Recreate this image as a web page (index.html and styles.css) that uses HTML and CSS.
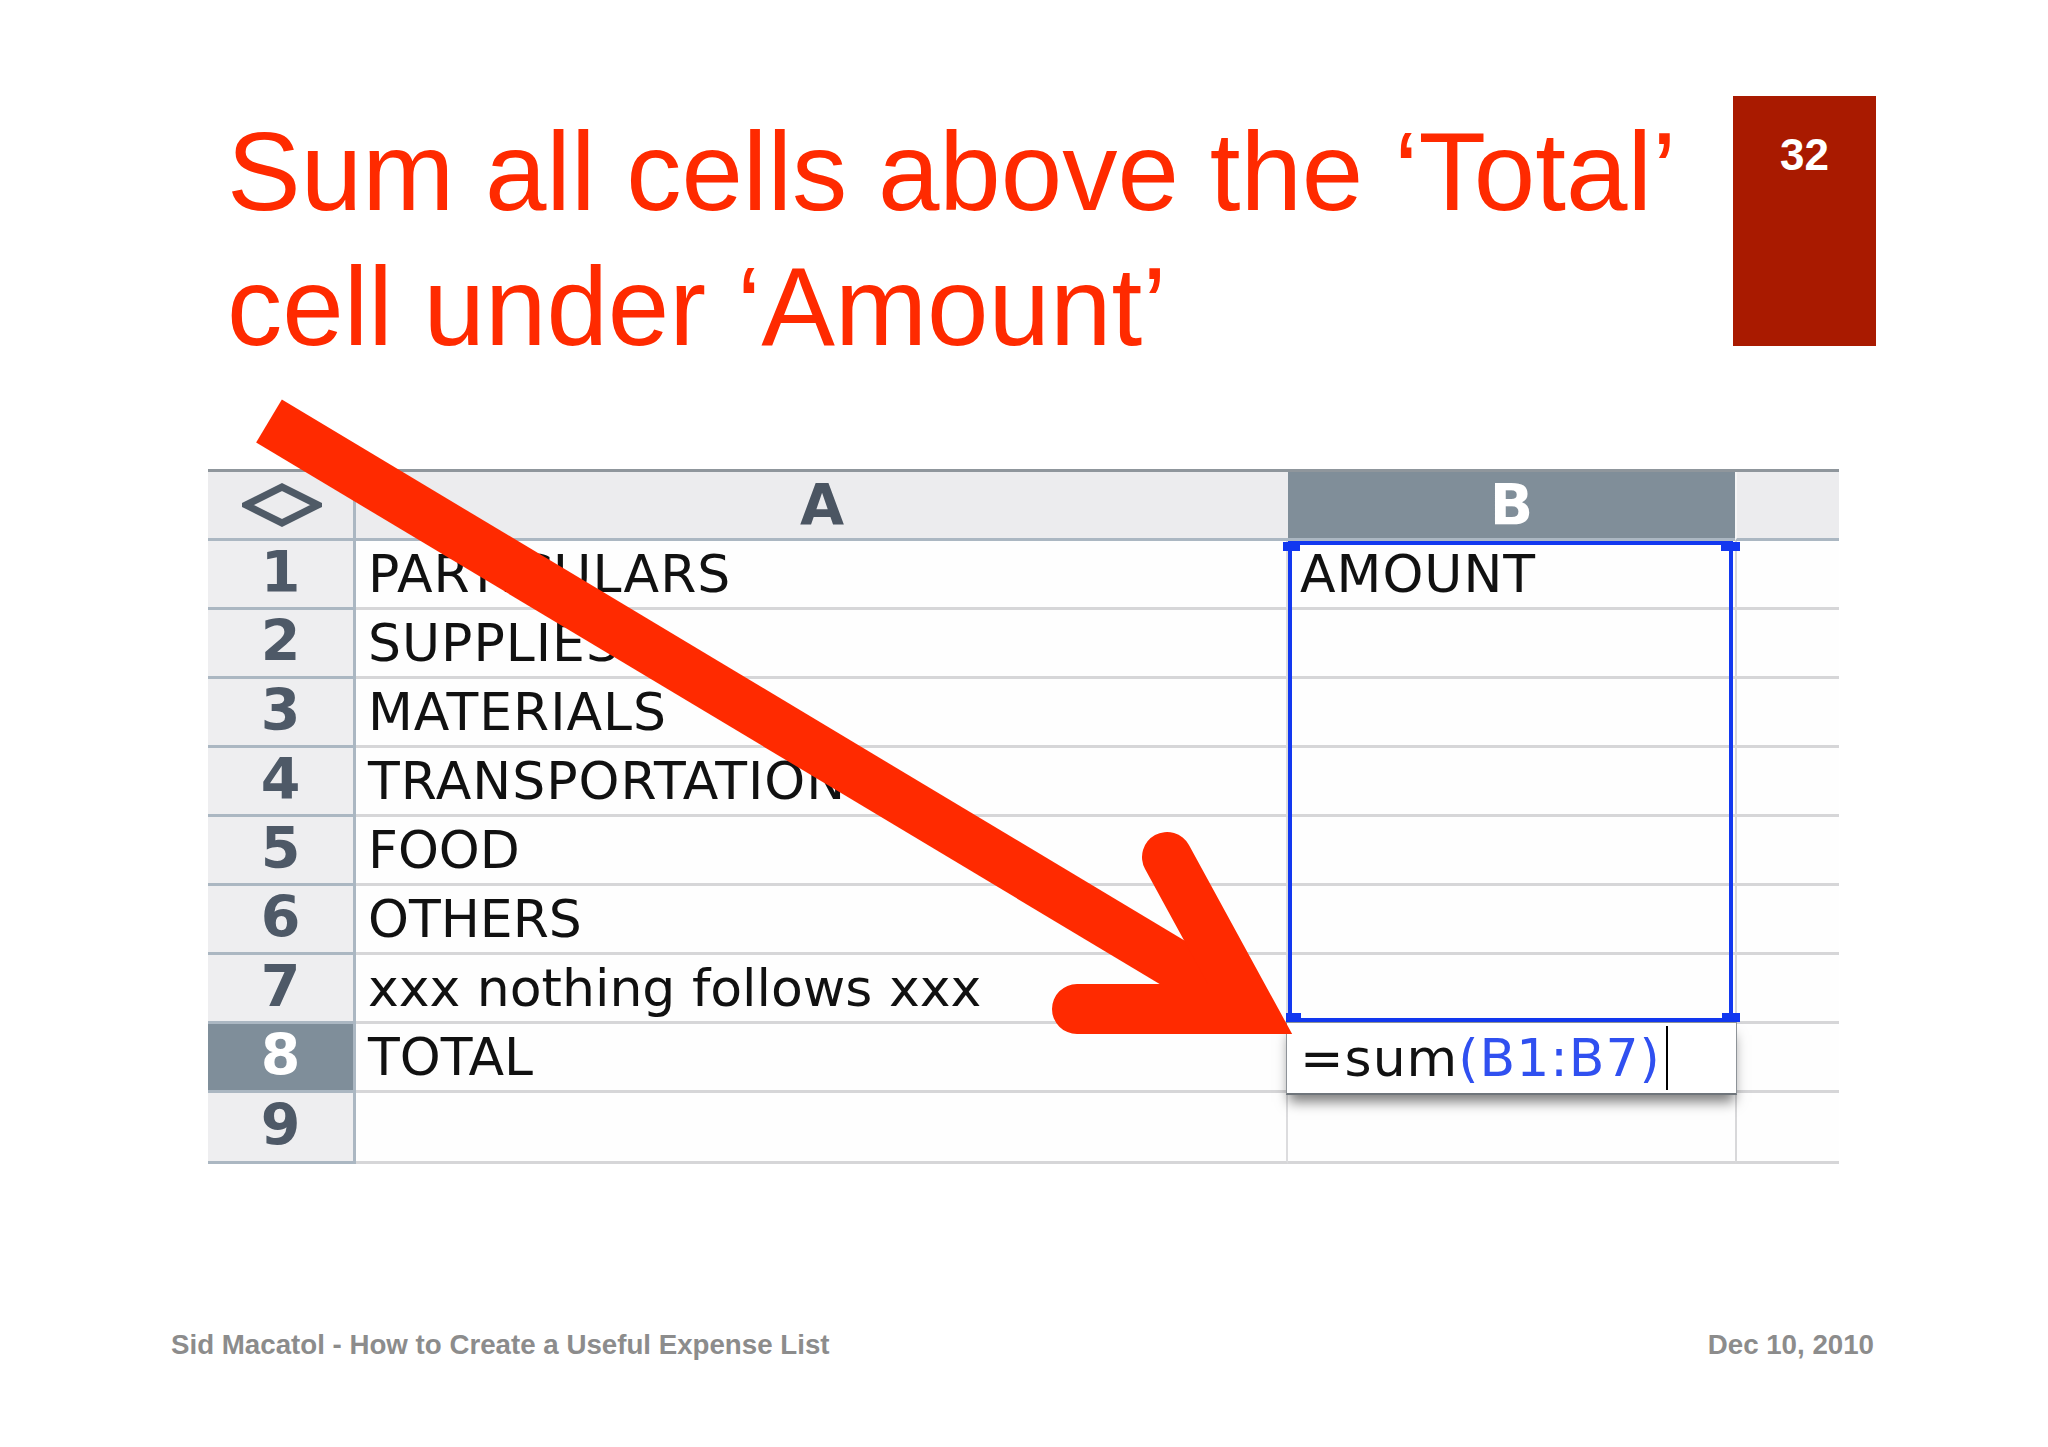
FILE: index.html
```html
<!DOCTYPE html>
<html lang="en">
<head>
<meta charset="utf-8">
<title>Sum all cells above the Total cell</title>
<link rel="stylesheet" href="styles.css">
</head>
<body>
<div class="slide">
  <header class="head">
    <h1 class="title">Sum all cells above the ‘Total’<br>cell under ‘Amount’</h1>
    <div class="num">32</div>
  </header>

  <div class="sheet">
    <div class="corner"><svg class="diamond" viewBox="0 0 80 44" width="80" height="44"><polygon points="4,22 40,4 76,22 40,40" fill="none" stroke="#4f5a66" stroke-width="7"/></svg></div>
    <div class="colhead">A</div>
    <div class="colhead sel">B</div>
    <div class="colhead last"></div>

    <div class="rowhead">1</div><div class="cell a caps">PARTICULARS</div><div class="cell b caps">AMOUNT</div><div class="cell c"></div>
    <div class="rowhead">2</div><div class="cell a caps">SUPPLIES</div><div class="cell b"></div><div class="cell c"></div>
    <div class="rowhead">3</div><div class="cell a caps">MATERIALS</div><div class="cell b"></div><div class="cell c"></div>
    <div class="rowhead">4</div><div class="cell a caps">TRANSPORTATION</div><div class="cell b"></div><div class="cell c"></div>
    <div class="rowhead">5</div><div class="cell a">FOOD</div><div class="cell b"></div><div class="cell c"></div>
    <div class="rowhead">6</div><div class="cell a">OTHERS</div><div class="cell b"></div><div class="cell c"></div>
    <div class="rowhead">7</div><div class="cell a">xxx nothing follows xxx</div><div class="cell b"></div><div class="cell c"></div>
    <div class="rowhead sel">8</div><div class="cell a">TOTAL</div><div class="cell b"></div><div class="cell c"></div>
    <div class="rowhead">9</div><div class="cell a"></div><div class="cell b"></div><div class="cell c"></div>

    <div class="selection"></div>
    <div class="handle h-tl"></div>
    <div class="handle h-tr"></div>
    <div class="handle h-bl"></div>
    <div class="handle h-br"></div>
    <div class="editor">=sum<span class="ref">(B1:B7)</span><span class="caret"></span></div>
  </div>

  <footer class="foot">
    <span>Sid Macatol - How to Create a Useful Expense List</span>
    <span>Dec 10, 2010</span>
  </footer>

  <svg class="arrow" viewBox="0 0 2048 1447" width="2048" height="1447">
    <line x1="269" y1="421" x2="1250" y2="1009" stroke="#ff2a00" stroke-width="50" stroke-linecap="butt"/>
    <polyline points="1167,857 1250,1009 1077,1009" fill="none" stroke="#ff2a00" stroke-width="50" stroke-linecap="round" stroke-linejoin="miter"/>
  </svg>
</div>
</body>
</html>
```

FILE: styles.css
```css
* { box-sizing: border-box; }
html, body { margin: 0; padding: 0; background: #ffffff; }

.slide {
  position: relative;
  width: 2048px;
  height: 1447px;
  overflow: hidden;
  display: flex;
  flex-direction: column;
  background: #ffffff;
}

.head {
  display: flex;
  align-items: flex-start;
  margin-top: 96px;
  padding-left: 227px;
  padding-right: 172px;
  height: 250px;
}

.title {
  flex: 1;
  margin: 8px 0 0 0;
  font-family: "Liberation Sans", Arial, sans-serif;
  font-weight: normal;
  font-size: 110.5px;
  line-height: 135px;
  color: #ff2a00;
  white-space: nowrap;
}

.num {
  width: 143px;
  height: 250px;
  background: #a91a00;
  color: #ffffff;
  font-family: "Liberation Sans", Arial, sans-serif;
  font-weight: bold;
  font-size: 44px;
  line-height: 44px;
  text-align: center;
  padding-top: 37px;
}

.sheet {
  position: relative;
  margin-top: 123px;
  margin-left: 208px;
  width: 1631px;
  display: grid;
  grid-template-columns: 148px 932px 447px 104px;
  grid-template-rows: repeat(9, 69px) 71px;
  border-top: 3px solid #8f969c;
  font-family: "DejaVu Sans", Verdana, sans-serif;
}

.corner, .colhead, .rowhead, .cell {
  display: flex;
  align-items: center;
  border-bottom: 3px solid #d6d6d8;
}

.corner {
  justify-content: center;
  background: #ececee;
  border-right: 3px solid #abb7c2;
  border-bottom-color: #abb7c2;
}
.diamond { display: block; margin-left: 2px; }

.colhead {
  justify-content: center;
  background: #ececee;
  border-bottom-color: #abb7c2;
  font-weight: bold;
  font-size: 57px;
  color: #4b5562;
}
.colhead.sel { background: #808e99; color: #ffffff; }
.colhead.last { border-left: 2px solid #f6f6f7; }

.rowhead {
  justify-content: center;
  background: #eeeef0;
  border-right: 3px solid #abb7c2;
  border-bottom-color: #abb7c2;
  font-weight: bold;
  font-size: 57px;
  color: #4e5967;
  padding-bottom: 4px;
}
.rowhead.sel { background: #7f8e9a; color: #ffffff; }

.cell {
  font-size: 52px;
  color: #111111;
  padding-left: 12px;
  white-space: nowrap;
  background: #fefefe;
}
.cell.caps { letter-spacing: 1px; }
.cell.a { border-right: 2px solid #dcdcde; overflow: visible; }
.cell.c { border-left: 2px solid #d8d8da; }

.selection {
  position: absolute;
  left: 1080px;
  top: 69px;
  width: 445px;
  height: 481px;
  border: 4px solid #1238f0;
}
.handle {
  position: absolute;
  background: #1238f0;
  height: 9px;
}
.h-tl { left: 1075px; top: 70px; width: 17px; }
.h-tr { left: 1513px; top: 70px; width: 19px; }
.h-bl { left: 1078px; top: 541px; width: 15px; }
.h-br { left: 1514px; top: 541px; width: 18px; }

.editor {
  position: absolute;
  left: 1078px;
  top: 550px;
  width: 451px;
  height: 73px;
  background: #ffffff;
  border: 1px solid #8e9398;
  border-bottom: 2px solid #6f757b;
  box-shadow: 0 10px 12px -3px rgba(0, 0, 0, 0.5);
  display: flex;
  align-items: center;
  padding-left: 13px;
  font-size: 52px;
  letter-spacing: 1px;
  color: #111111;
  white-space: nowrap;
}
.ref { color: #3050f0; }
.caret {
  display: inline-block;
  width: 2px;
  height: 64px;
  background: #000000;
  margin-left: 5px;
}

.foot {
  display: flex;
  justify-content: space-between;
  margin-top: 164px;
  padding-left: 171px;
  padding-right: 174px;
  font-family: "Liberation Sans", Arial, sans-serif;
  font-weight: bold;
  font-size: 27.7px;
  line-height: 34px;
  color: #8c8c8c;
}

.arrow {
  position: absolute;
  left: 0;
  top: 0;
  pointer-events: none;
}
```
